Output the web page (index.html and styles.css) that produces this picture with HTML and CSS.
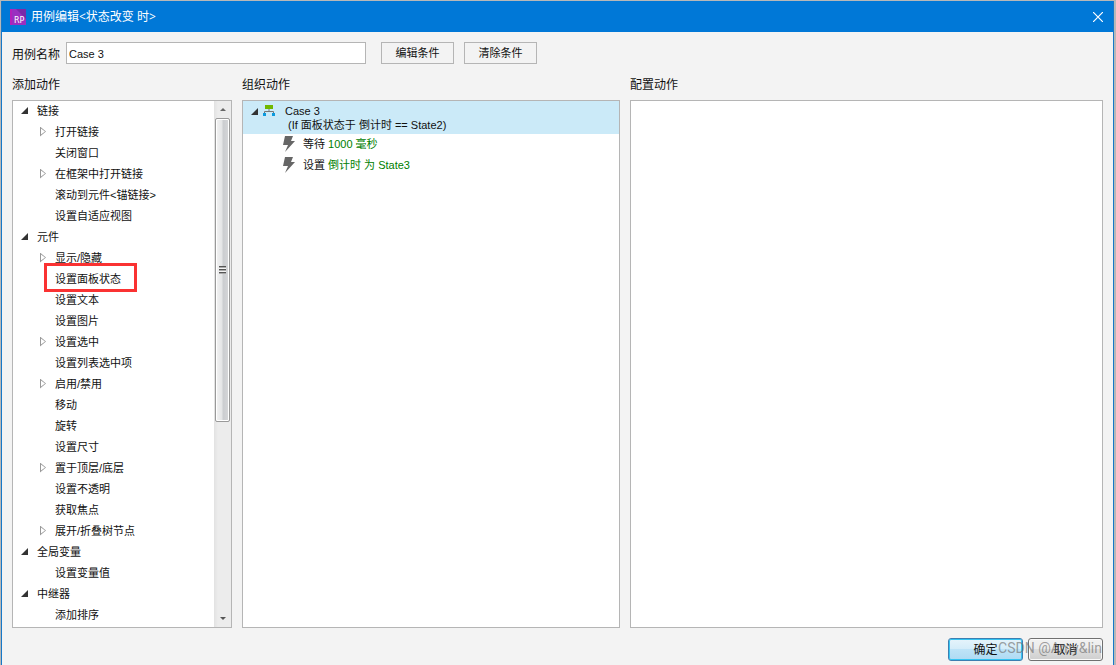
FILE: index.html
```html
<!DOCTYPE html>
<html lang="zh-CN">
<head>
<meta charset="utf-8">
<title>用例编辑</title>
<link rel="stylesheet" href="styles.css">
</head>
<body>
<main class="window">
  <header class="titlebar">
    <svg class="logo" viewBox="0 0 16 16" aria-hidden="true">
      <rect width="16" height="16" fill="#9a2fc0"/>
      <path d="M0 0h2v16H0z" fill="#b51fb9"/>
      <path d="M6 0h10v10z" fill="#7a2aa8"/>
      <text class="logo-text" x="4" y="14">RP</text>
    </svg>
    <h1 class="title">用例编辑&lt;状态改变 时&gt;</h1>
    <button class="close" aria-label="关闭"><svg viewBox="0 0 10 10" width="10" height="10"><path d="M0 0l10 10M10 0L0 10" stroke="#fff" stroke-width="1.2"/></svg></button>
  </header>

  <form class="toolbar">
    <label class="name-label" for="case-name">用例名称</label>
    <input class="name-input" id="case-name" type="text" value="Case 3">
    <button class="flat" type="button">编辑条件</button>
    <button class="flat" type="button">清除条件</button>
  </form>

  <div class="columns">
    <section class="column column-add">
      <h2 class="heading">添加动作</h2>
      <div class="panel panel-add">
        <ul class="tree">
          <li class="row"><button class="toggle open" aria-label="折叠"></button>链接</li>
          <li class="row child"><button class="toggle" aria-label="展开"></button>打开链接</li>
          <li class="row child leaf">关闭窗口</li>
          <li class="row child"><button class="toggle" aria-label="展开"></button>在框架中打开链接</li>
          <li class="row child leaf">滚动到元件&lt;锚链接&gt;</li>
          <li class="row child leaf">设置自适应视图</li>
          <li class="row"><button class="toggle open" aria-label="折叠"></button>元件</li>
          <li class="row child"><button class="toggle" aria-label="展开"></button>显示/隐藏</li>
          <li class="row child leaf marked">设置面板状态</li>
          <li class="row child leaf">设置文本</li>
          <li class="row child leaf">设置图片</li>
          <li class="row child"><button class="toggle" aria-label="展开"></button>设置选中</li>
          <li class="row child leaf">设置列表选中项</li>
          <li class="row child"><button class="toggle" aria-label="展开"></button>启用/禁用</li>
          <li class="row child leaf">移动</li>
          <li class="row child leaf">旋转</li>
          <li class="row child leaf">设置尺寸</li>
          <li class="row child"><button class="toggle" aria-label="展开"></button>置于顶层/底层</li>
          <li class="row child leaf">设置不透明</li>
          <li class="row child leaf">获取焦点</li>
          <li class="row child"><button class="toggle" aria-label="展开"></button>展开/折叠树节点</li>
          <li class="row"><button class="toggle open" aria-label="折叠"></button>全局变量</li>
          <li class="row child leaf">设置变量值</li>
          <li class="row"><button class="toggle open" aria-label="折叠"></button>中继器</li>
          <li class="row child leaf">添加排序</li>
        </ul>
        <div class="scrollbar">
          <button class="arrow" aria-label="向上滚动"><svg viewBox="0 0 6 3" width="6" height="3"><path d="M0 3l3-3 3 3z" fill="#666"/></svg></button>
          <div class="thumb"><span class="grip"></span></div>
          <div class="track"></div>
          <button class="arrow" aria-label="向下滚动"><svg viewBox="0 0 6 3" width="6" height="3"><path d="M0 0l3 3 3-3z" fill="#555"/></svg></button>
        </div>
      </div>
    </section>

    <section class="column column-organize">
      <h2 class="heading">组织动作</h2>
      <div class="panel">
        <div class="case">
          <button class="toggle open" aria-label="折叠"></button>
          <svg class="case-icon" viewBox="0 0 12 12" aria-hidden="true">
            <path d="M2 0h8v4H2z" fill="#71b800"/>
            <path d="M6 4v2.500M1.500 9V6.500h9V9" fill="none" stroke="#777"/>
            <path d="M0 8h3v3H0zM9 8h3v3H9z" fill="#0a9ade"/>
          </svg>
          <div class="case-text">
            <p class="case-name">Case 3</p>
            <p class="case-rule">(If 面板状态于 倒计时 == State2)</p>
          </div>
        </div>
        <ul class="actions">
          <li class="action"><svg class="bolt" viewBox="0 0 12 16" aria-hidden="true"><path d="M2 0h8L8 5h4L2 16l3-7H0z" fill="#666"/></svg>等待&nbsp;<span class="value">1000 毫秒</span></li>
          <li class="action"><svg class="bolt" viewBox="0 0 12 16" aria-hidden="true"><path d="M2 0h8L8 5h4L2 16l3-7H0z" fill="#666"/></svg>设置&nbsp;<span class="value">倒计时 为 State3</span></li>
        </ul>
      </div>
    </section>

    <section class="column column-configure">
      <h2 class="heading">配置动作</h2>
      <div class="panel"></div>
    </section>
  </div>

  <footer class="footer">
    <button class="glossy primary">确定</button>
    <button class="glossy">取消</button>
    <span class="watermark">CSDN @Amy&amp;lin</span>
  </footer>
</main>
</body>
</html>
```
FILE: styles.css
```css
*, *::before, *::after { box-sizing: border-box; }
body {
  margin: 0;
  padding: 1px 2px 0 0;
  height: 100vh;
  background: #b8b8b8;
  color: #111;
  font: 11px/14px "Liberation Sans", "Noto Sans CJK SC", sans-serif;
}
h1, h2, p, ul { margin: 0; padding: 0; font-weight: normal; list-style: none; }
button, input { font: inherit; color: inherit; margin: 0; border-radius: 0; }
.window {
  display: flex;
  flex-direction: column;
  height: 100%;
  margin-left: 1px;
  border: solid #1778c8;
  border-width: 0 1px;
  background: #f3f3f3;
}
.titlebar {
  display: flex;
  align-items: center;
  height: 31px;
  padding: 0 10px 0 8px;
  background: #0078d7;
  color: #fff;
}
.logo { width: 16px; height: 16px; }
.logo-text { font: 8px "DejaVu Sans", sans-serif; fill: #fff; }
.title { flex: 1; margin-left: 5px; font-size: 12px; line-height: 16px; font-family: "Open Sans", "Noto Sans CJK SC", sans-serif; }
.close { display: flex; padding: 0; border: 0; background: none; }
.toolbar { display: flex; align-items: center; padding: 10px 10px 0; }
.name-label { width: 54px; padding-top: 3px; font-size: 12px; white-space: nowrap; }
.name-input {
  width: 300px;
  height: 22px;
  margin-right: 15px;
  padding: 2px 2px 0;
  border: 1px solid #b5b5b5;
  background: #fff;
}
.flat {
  width: 73px;
  height: 22px;
  margin-right: 10px;
  padding: 0;
  border: 1px solid #b5b5b5;
  background: #f3f3f3;
}
.columns { flex: 1; min-height: 0; display: flex; gap: 10px; padding: 0 10px; }
.column { display: flex; flex-direction: column; min-width: 0; }
.column-add { flex: 0 0 220px; }
.column-organize { flex: 378; }
.column-configure { flex: 473; }
.heading { height: 36px; padding-top: 12px; font-size: 12px; line-height: 18px; }
.panel { flex: 1; min-height: 0; overflow: hidden; border: 1px solid #b5b5b5; background: #fff; }
.panel-add { display: flex; }
.tree { flex: 1; }
.row { display: flex; align-items: center; height: 21px; padding: 0 0 2px 6px; white-space: nowrap; }
.child { padding-left: 24px; }
.leaf { padding-left: 42px; }
.toggle {
  width: 9px;
  height: 21px;
  margin-right: 9px;
  padding: 0;
  border: 0;
  background: none;
  display: flex;
  align-items: center;
}
.toggle::before {
  content: "";
  width: 6px;
  height: 10px;
  margin-left: 3px;
  background: #999;
  clip-path: polygon(evenodd, 0 0, 6px 5px, 0 10px, 0 0, 1px 2px, 1px 8px, 5px 5px, 1px 2px);
}
.toggle.open::before {
  width: 7px;
  height: 7px;
  margin-left: 2px;
  background: #333;
  clip-path: polygon(100% 0, 100% 100%, 0 100%);
}
.marked { position: relative; }
.marked::after {
  content: "";
  position: absolute;
  left: 31px;
  top: -6px;
  width: 93px;
  height: 29px;
  border: 3px solid #fa3232;
}
.scrollbar {
  display: flex;
  flex-direction: column;
  width: 17px;
  padding: 0 1px;
  background: linear-gradient(90deg, #e2e2e2, #ececec 4px, #ececec);
}
.arrow {
  display: flex;
  align-items: center;
  justify-content: center;
  height: 17px;
  padding: 0;
  border: 0;
  background: none;
}
.thumb {
  flex: 303;
  display: flex;
  align-items: center;
  justify-content: center;
  border: 1px solid #999;
  border-radius: 2px;
  box-shadow: inset 0 0 0 1px #fff;
  background: linear-gradient(90deg, #f3f3f3, #e4e5e6 45%, #cbcdd0 55%, #d6d7d9);
}
.track { flex: 189; }
.grip {
  width: 7px;
  height: 8px;
  background: repeating-linear-gradient(#555 0 1px, #aaa 1px 2px, #f3f3f3 2px 3px);
}
.case { display: flex; height: 33px; padding-left: 6px; background: #cbeaf8; }
.case-icon { width: 12px; height: 12px; margin-top: 4px; }
.case .toggle { margin-right: 5px; }
.case-text { margin-left: 10px; padding-top: 3px; }
.case-rule { padding-left: 3px; }
.action { display: flex; align-items: center; height: 21px; padding: 0 0 2px 40px; }
.bolt { width: 12px; height: 16px; margin-right: 8px; }
.value { color: #008000; }
.footer { position: relative; display: flex; justify-content: flex-end; gap: 5px; padding: 10px 10px 4px; }
.glossy {
  width: 75px;
  height: 23px;
  padding: 0;
  border: 1px solid #707070;
  border-radius: 3px;
  box-shadow: inset 0 0 0 1px #fafafa;
  background: linear-gradient(#f2f2f2, #ebebeb 50%, #dddddd 50%, #cfcfcf);
  font-size: 12px;
}
.primary {
  border-color: #3c7fb1;
  box-shadow: inset 0 0 0 1px #35c4f2;
  background: linear-gradient(#e6f4fb, #d3ecf9 50%, #bee3f7 50%, #aedaf3);
}
.watermark {
  position: absolute;
  right: 11px;
  top: 10px;
  color: rgba(110, 110, 110, .65);
  font: 14px/20px Roboto, sans-serif;
  pointer-events: none;
}
```
